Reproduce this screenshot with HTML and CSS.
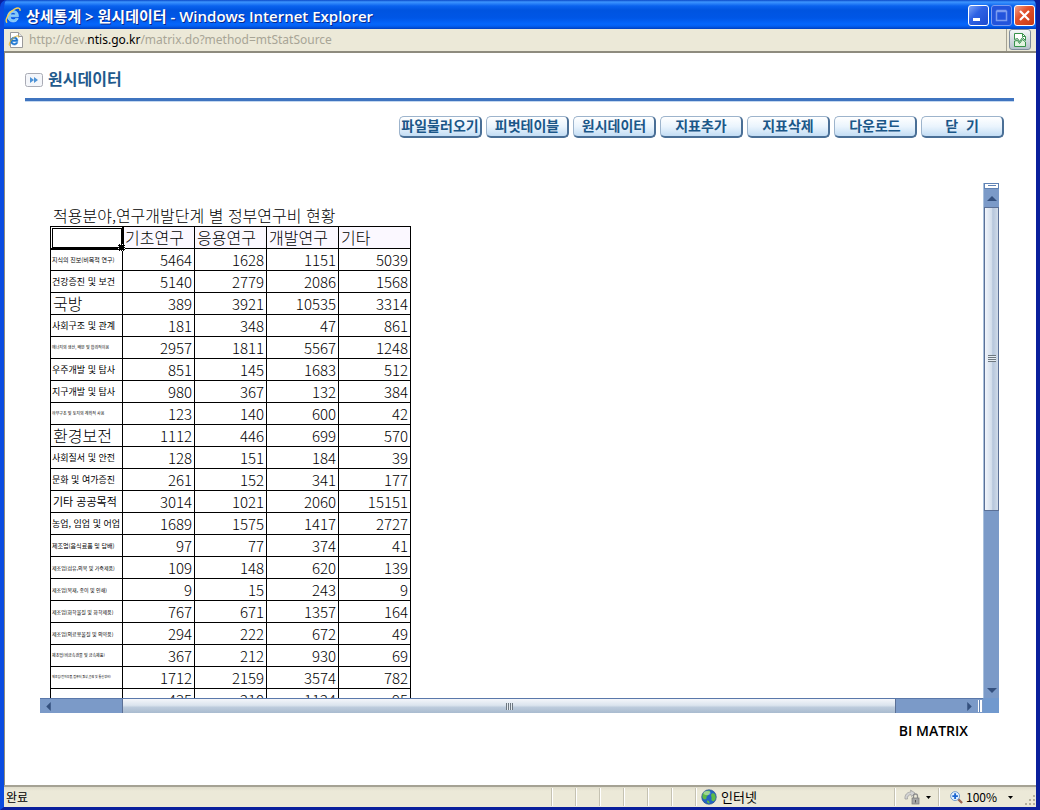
FILE: index.html
```html
<!DOCTYPE html>
<html lang="ko">
<head>
<meta charset="utf-8">
<title>상세통계 &gt; 원시데이터</title>
<link rel="stylesheet" href="styles.css">
</head>
<body>
<div class="window">
  <header class="titlebar">
    <svg class="icon-ie" viewBox="0 0 18 18" aria-hidden="true">
      <path d="M14.2 10.4H5.6c.1 2 1.3 3.1 3 3.1 1.200 0 2-.5 2.600-1.400h2.800c-.8 2.500-2.800 3.800-5.400 3.800-3.500 0-5.900-2.400-5.900-6s2.500-6.100 6-6.100c3.600 0 5.800 2.600 5.500 6.600zM5.700 8.300h5.700c-.2-1.600-1.200-2.400-2.700-2.400-1.600 0-2.700.9-3 2.400z" fill="#7cc8f8" stroke="#d8f0ff" stroke-width=".5"/>
      <path d="M2.300 16.600C-.8 14.500 4 5.500 10 2.300c3.500-1.900 6.600-1.600 5.800 1.900" fill="none" stroke="#f3cf58" stroke-width="1.500"/>
    </svg>
    <h1 class="caption">상세통계 &gt; 원시데이터 - Windows Internet Explorer</h1>
    <div class="window-buttons">
      <button class="win-btn" aria-label="최소화"><svg viewBox="0 0 19 19"><rect x="4" y="12" width="7" height="3" fill="#fff"/></svg></button>
      <button class="win-btn win-btn-off" aria-label="최대화" disabled><svg viewBox="0 0 19 19"><path d="M4.500 5.500h10v9h-10zM4.500 4.500h10" fill="none" stroke="#7c9cf0" stroke-width="1.500"/></svg></button>
      <button class="win-btn win-btn-close" aria-label="닫기"><svg viewBox="0 0 19 19"><path d="M5 5l9 9M14 5l-9 9" fill="none" stroke="#fff" stroke-width="2.200"/></svg></button>
    </div>
  </header>

  <div class="addressbar">
    <div class="address">
      <svg class="icon-page" viewBox="0 0 16 16" aria-hidden="true">
        <path d="M2.500.5h8l4 4v11h-12z" fill="#fff" stroke="#9a9a9a"/>
        <path d="M10.500.5v4h4" fill="#e4e4e4" stroke="#9a9a9a"/>
        <path d="M9.900 9.400H4.300c.1 1.300.9 2 2 2 .7 0 1.300-.3 1.700-.9h1.800c-.5 1.600-1.800 2.500-3.500 2.500-2.300 0-3.900-1.600-3.900-3.900s1.600-4 3.900-4 3.800 1.700 3.600 4.300zM4.400 8h3.700c-.1-1-.8-1.500-1.800-1.500S4.600 7 4.400 8z" fill="#1d76d0" stroke="#1d76d0" stroke-width=".5"/>
        <path d="M1.500 13.600C.2 12 3.500 6.500 7.500 4.500c2-1 3.800-.8 3.200 1" fill="none" stroke="#e0b22c"/>
      </svg>
      <span class="url">http://dev.<b>ntis.go.kr</b>/matrix.do?method=mtStatSource</span>
    </div>
    <button class="compat" aria-label="호환성 보기">
      <svg viewBox="0 0 16 16"><path d="M2.500 7.500v-6h8l3 3v4l-3-3-3 4-2-3z" fill="#fff" stroke="#36924a"/><path d="M2.500 9v5.500h11V10l-3-2.500-3 4-2-3z" fill="#e2f4e0" stroke="#36924a"/><path d="M10.500 1.500v3h3" fill="none" stroke="#36924a"/></svg>
    </button>
  </div>

  <main class="page">
    <div class="heading">
      <svg class="icon-heading" viewBox="0 0 18 14" aria-hidden="true"><rect x=".5" y=".5" width="17" height="13" rx="2" fill="#f4f6fa" stroke="#a9abb5"/><path d="M5 4l4 3-4 3zM9 4l4 3-4 3z" fill="#4e93d6"/></svg>
      <h2>원시데이터</h2>
    </div>

    <div class="toolbar">
      <button class="tool">파일불러오기</button>
      <button class="tool">피벗테이블</button>
      <button class="tool">원시데이터</button>
      <button class="tool">지표추가</button>
      <button class="tool">지표삭제</button>
      <button class="tool">다운로드</button>
      <button class="tool">닫&nbsp; 기</button>
    </div>

    <section class="sheet">
      <div class="cells">
        <table class="grid">
          <caption>적용분야,연구개발단계 별 정부연구비 현황</caption>
          <thead>
            <tr><th class="selected"></th><th>기초연구</th><th>응용연구</th><th>개발연구</th><th>기타</th></tr>
          </thead>
          <tbody>
            <tr><th class="t6">지식의 진보(비목적 연구)</th><td>5464</td><td>1628</td><td>1151</td><td>5039</td></tr>
            <tr><th class="t9">건강증진 및 보건</th><td>5140</td><td>2779</td><td>2086</td><td>1568</td></tr>
            <tr><th>국방</th><td>389</td><td>3921</td><td>10535</td><td>3314</td></tr>
            <tr><th class="t9">사회구조 및 관계</th><td>181</td><td>348</td><td>47</td><td>861</td></tr>
            <tr><th class="t4">에너지의 생산, 배분 및 합리적이용</th><td>2957</td><td>1811</td><td>5567</td><td>1248</td></tr>
            <tr><th class="t9">우주개발 및 탐사</th><td>851</td><td>145</td><td>1683</td><td>512</td></tr>
            <tr><th class="t9">지구개발 및 탐사</th><td>980</td><td>367</td><td>132</td><td>384</td></tr>
            <tr><th class="t4">하부구조 및 토지의 계획적 사용</th><td>123</td><td>140</td><td>600</td><td>42</td></tr>
            <tr><th>환경보전</th><td>1112</td><td>446</td><td>699</td><td>570</td></tr>
            <tr><th class="t9">사회질서 및 안전</th><td>128</td><td>151</td><td>184</td><td>39</td></tr>
            <tr><th class="t9">문화 및 여가증진</th><td>261</td><td>152</td><td>341</td><td>177</td></tr>
            <tr><th class="t11">기타 공공목적</th><td>3014</td><td>1021</td><td>2060</td><td>15151</td></tr>
            <tr><th class="t9">농업, 임업 및 어업</th><td>1689</td><td>1575</td><td>1417</td><td>2727</td></tr>
            <tr><th class="t6">제조업(음식료품 및 담배)</th><td>97</td><td>77</td><td>374</td><td>41</td></tr>
            <tr><th class="t5">제조업(섬유,의복 및 가죽제품)</th><td>109</td><td>148</td><td>620</td><td>139</td></tr>
            <tr><th class="t5">제조업(목재, 종이 및 인쇄)</th><td>9</td><td>15</td><td>243</td><td>9</td></tr>
            <tr><th class="t5">제조업(화학물질 및 화학제품)</th><td>767</td><td>671</td><td>1357</td><td>164</td></tr>
            <tr><th class="t5">제조업(의료용물질 및 의약품)</th><td>294</td><td>222</td><td>672</td><td>49</td></tr>
            <tr><th class="t4">제조업(비금속광물 및 금속제품)</th><td>367</td><td>212</td><td>930</td><td>69</td></tr>
            <tr><th class="t3">제조업(전자부품,컴퓨터,영상,음향 및 통신장비)</th><td>1712</td><td>2159</td><td>3574</td><td>782</td></tr>
            <tr><th></th><td>435</td><td>210</td><td>1124</td><td>95</td></tr>
          </tbody>
        </table>
      </div>
      <div class="vscroll">
        <span class="split-v"></span>
        <button class="arrow arrow-up" aria-label="위로"><svg viewBox="0 0 10 5"><path d="M0 5l5-5 5 5z"/></svg></button>
        <div class="vthumb"><span class="grip grip-v"></span></div>
        <div class="vtrack"></div>
        <button class="arrow arrow-down" aria-label="아래로"><svg viewBox="0 0 10 5"><path d="M0 0l5 5 5-5z"/></svg></button>
      </div>
      <div class="hscroll">
        <button class="arrow arrow-left" aria-label="왼쪽으로"><svg viewBox="0 0 5 10"><path d="M5 0L0 5l5 5z"/></svg></button>
        <div class="hlead"></div>
        <div class="hthumb"><span class="grip grip-h"></span></div>
        <div class="htrack"></div>
        <button class="arrow arrow-right" aria-label="오른쪽으로"><svg viewBox="0 0 5 10"><path d="M0 0l5 5-5 5z"/></svg></button>
        <span class="split-h"></span>
      </div>
      <div class="corner"></div>
    </section>
    <p class="brand">BI MATRIX</p>
  </main>

  <footer class="statusbar">
    <span class="status-text">완료</span>
    <span class="slot"></span><span class="slot"></span><span class="slot"></span><span class="slot"></span><span class="slot"></span><span class="slot"></span>
    <span class="slot zone">
      <svg class="icon-globe" viewBox="0 0 16 16" aria-hidden="true"><circle cx="8" cy="8" r="7.300" fill="#2463c4" stroke="#234a86" stroke-width=".6"/><path d="M2 4.500C4 1.500 8 1 9 2c1 1.500-1 2-1.500 3.500S5 7 5.500 8.500 4 11 2.500 10 1 6.500 2 4.500zM11 4.500c2-1 3 .5 3.500 2.500s0 4-1.500 5-3-.5-2.500-2.500S9 6 11 4.500zM6 11.500c1.500-.5 3 1 2.500 3-1.500.3-3-1.500-2.500-3z" fill="#5dbb46"/><ellipse cx="6" cy="4" rx="3.500" ry="2" fill="#fff" opacity=".4"/></svg>
      인터넷
    </span>
    <span class="slot lock">
      <svg class="icon-lock" viewBox="0 0 16 16" aria-hidden="true"><path d="M1 10c-.5-4 2-7 6-7l-.5-2L11 4 7.500 7.500 7 5.500C4.500 6 3 7.500 3.500 10z" fill="#d2d2d2" stroke="#9a9a9a" stroke-width=".7"/><path d="M9.500 9V7a2 2 0 014 0v2" fill="none" stroke="#8d8d8d" stroke-width="1.300"/><rect x="8" y="9" width="7" height="6" fill="#a5a5a5" stroke="#777" stroke-width=".7"/><path d="M11.500 11v2.500" stroke="#555"/></svg>
      <svg class="caret" viewBox="0 0 5 3" aria-hidden="true"><path d="M0 0h5L2.500 3z"/></svg>
    </span>
    <span class="slot zoom">
      <svg class="icon-zoom" viewBox="0 0 14 14" aria-hidden="true"><path d="M8.500 8.500L13 13" stroke="#9b6350" stroke-width="2.400"/><circle cx="5.500" cy="5.500" r="4.800" fill="#e4f2ff" stroke="#6a94c8"/><path d="M5.500 2.500v6M2.500 5.500h6" stroke="#1c66d0" stroke-width="2"/></svg>
      <span class="percent">100%</span>
      <svg class="caret" viewBox="0 0 5 3" aria-hidden="true"><path d="M0 0h5L2.500 3z"/></svg>
      <svg class="sizer" viewBox="0 0 11 11" aria-hidden="true"><path d="M8 0h2v2H8zM4 4h2v2H4zM8 4h2v2H8zM0 8h2v2H0zM4 8h2v2H4zM8 8h2v2H8z" fill="#b4b19f"/></svg>
    </span>
  </footer>
</div>
</body>
</html>
```
FILE: styles.css
```css
* {
  box-sizing: border-box;
}

body {
  margin: 0;
  background: #0a1f9c;
  color: #000;
  font-family: "Liberation Sans", "Noto Sans CJK KR", sans-serif;
  font-size: 12px;
}

button {
  display: flex;
  align-items: center;
  justify-content: center;
  margin: 0;
  padding: 0;
  border: 0;
  font-family: inherit;
}

svg {
  display: block;
  flex: none;
}

.window {
  display: flex;
  flex-direction: column;
  height: 100vh;
  min-height: 480px;
  overflow: hidden;
  border: solid;
  border-width: 0 4px 3px;
  border-color: #0a4be0 #0a1f9c #0a1f9c #0a4be0;
  border-radius: 7px 7px 0 0;
}

/* Title bar */
.titlebar {
  display: flex;
  flex: none;
  align-items: center;
  gap: 4px;
  height: 29px;
  margin: 0 -4px;
  padding: 2px 5px 0;
  background: linear-gradient(#0a48c8 0, #3d95ff 2px, #0a62ee 6px, #0054e0 10px, #0056e6 18px, #0566fc 24px, #0460f2 26px, #0040c0 29px);
}

.icon-ie {
  width: 17px;
  height: 17px;
}

.caption {
  flex: 1;
  margin: 0;
  color: #fff;
  font-family: "Open Sans", "Noto Sans CJK KR", sans-serif;
  font-size: 15px;
  font-weight: 600;
  line-height: 20px;
  white-space: nowrap;
  text-shadow: 1px 1px #0a2a8c;
}

.window-buttons {
  display: flex;
  gap: 2px;
}

.win-btn {
  width: 21px;
  height: 21px;
  border: 1px solid #fff;
  border-radius: 3px;
  background: linear-gradient(135deg, #7da4f6, #2f62e4 40%, #1c4bd0);
}

.win-btn svg {
  width: 19px;
  height: 19px;
}

.win-btn-off {
  border-color: #7c9cf0;
  background: #2354dc;
}

.win-btn-close {
  background: linear-gradient(135deg, #f0a08a, #e2512c 40%, #c63a14);
}

/* Address bar */
.addressbar {
  display: flex;
  flex: none;
  height: 24px;
  padding-left: 1px;
  border-bottom: 2px solid #8e8b7e;
  background: #ece9d8;
}

.address {
  display: flex;
  flex: 1;
  align-items: center;
  gap: 5px;
  padding-left: 3px;
  border-right: 1px solid #a5a294;
}

.icon-page {
  width: 16px;
  height: 16px;
}

.url {
  color: #a8a596;
  font-family: "Noto Sans", "Noto Sans CJK KR", sans-serif;
  font-size: 12px;
  line-height: 18px;
}

.url b {
  color: #000;
  font-weight: 400;
}

.compat {
  width: 22px;
  height: 21px;
  margin: 0 5px 0 2px;
  border: 1px solid #7f8c9c;
  border-radius: 3px;
  background: linear-gradient(#f4f7f8, #b6c2cc);
}

.compat svg {
  width: 16px;
  height: 16px;
}

/* Page */
.page {
  display: flex;
  flex: 1;
  flex-direction: column;
  min-height: 0;
  padding: 16px 22px 0 20px;
  border-left: 1px solid #8e8b7e;
  background: #fff;
}

.heading {
  display: flex;
  flex: none;
  align-items: center;
  gap: 5px;
  height: 32px;
  padding-bottom: 8px;
  border-bottom: 3px solid #3f74bf;
  box-shadow: 0 1px #c4d8f0;
}

.icon-heading {
  width: 18px;
  height: 14px;
}

.heading h2 {
  margin: 0;
  color: #1f5a8c;
  font-size: 16px;
  font-weight: 700;
  line-height: 20px;
}

.toolbar {
  display: flex;
  flex: none;
  justify-content: flex-end;
  gap: 4px;
  padding: 15px 10px 45px 0;
}

.tool {
  width: 83px;
  height: 22px;
  padding-bottom: 2px;
  border: 1px solid #9db4cc;
  border-right: 2px solid #4a6f96;
  border-bottom: 2px solid #4a6f96;
  border-radius: 5px;
  background: linear-gradient(#fff, #eaf4fd 50%, #c3ddf4);
  color: #1b5788;
  font-size: 14px;
  font-weight: 700;
  line-height: 16px;
  white-space: nowrap;
}

.sheet {
  display: grid;
  flex: 1;
  grid-template: minmax(0, 1fr) 15px / minmax(0, 1fr) 16px;
  min-height: 0;
  margin: 0 15px;
}

.cells {
  overflow: hidden;
  padding: 22px 0 0 10px;
}

.grid {
  width: 361px;
  table-layout: fixed;
  border-collapse: collapse;
  font-size: 16px;
}

.grid caption {
  height: 21px;
  padding-left: 3px;
  font-family: "Noto Sans CJK KR", sans-serif;
  font-weight: 300;
  line-height: 21px;
  text-align: left;
  white-space: nowrap;
}

.grid th,
.grid td {
  height: 22px;
  padding: 0 2px;
  border: 1px solid #000;
  line-height: 21px;
  white-space: nowrap;
}

.grid th {
  font-family: "Noto Sans CJK KR", sans-serif;
  font-weight: 300;
  text-align: left;
}

.grid thead th {
  background: #fbf8ff;
}

.grid td {
  font-family: "Noto Sans CJK KR", sans-serif;
  font-size: 15px;
  font-weight: 300;
  text-align: right;
}

/* Active cell with its fill handle */
.grid thead .selected {
  position: relative;
  background: #fff;
  outline: 3px double #000;
  outline-offset: -2px;
}

.selected::after {
  content: "";
  position: absolute;
  right: -3px;
  bottom: -3px;
  width: 5px;
  height: 5px;
  border: 1px dotted #fff;
  background: #000;
}

.grid .t11 { font-size: 11px; }
.grid .t9 { font-size: 9px; }
.grid .t6 { font-size: 6px; }
.grid .t5 { font-size: 5px; }
.grid .t4 { font-size: 4px; }
.grid .t3 { font-size: 3px; }

.grid .t11,
.grid .t9,
.grid .t6,
.grid .t5,
.grid .t4,
.grid .t3 {
  font-weight: 400;
}

.grid .t9,
.grid .t6,
.grid .t5,
.grid .t4,
.grid .t3 {
  padding-left: 1px;
}

/* Scroll bars */
.vscroll {
  display: flex;
  flex-direction: column;
  border-left: 1px solid #a9c0dc;
  background: #7b9ac8;
}

.split-v {
  height: 6px;
  border: 1px solid #5f82b4;
  background: linear-gradient(#fff 1px, #5f82b4 1px, #5f82b4 2px, #fff 2px) center / 8px 4px no-repeat #fff;
}

.arrow {
  flex: none;
  background: #7b9ac8;
  fill: #34507e;
}

.arrow-up {
  height: 18px;
}

.arrow-down {
  height: 16px;
}

.arrow-up svg,
.arrow-down svg {
  width: 10px;
  height: 5px;
}

.vthumb {
  display: flex;
  flex: 303;
  align-items: center;
  justify-content: center;
  border: 1px solid #5b7096;
  background: linear-gradient(90deg, #f0f4fb, #d3deec 50%, #b6c6dc 60%, #d0dbe9);
}

.vtrack {
  flex: 172;
}

.grip-v {
  width: 8px;
  height: 7px;
  background: repeating-linear-gradient(#6d7780 0, #6d7780 1px, #e4ebf2 1px, #e4ebf2 2px);
}

.hscroll {
  display: flex;
  border-top: 1px solid #5a78aa;
  background: #7b9ac8;
}

.arrow-left,
.arrow-right {
  width: 16px;
}

.arrow-left svg,
.arrow-right svg {
  width: 5px;
  height: 9px;
}

.hlead {
  flex: 66;
}

.hthumb {
  display: flex;
  flex: 774;
  align-items: center;
  justify-content: center;
  border: solid #5b7096;
  border-width: 0 1px;
  background: linear-gradient(#f4f6fa, #dbe4ee 45%, #bccbdc 60%, #a9bbcf);
}

.grip-h {
  width: 7px;
  height: 7px;
  background: repeating-linear-gradient(90deg, #6d7780 0, #6d7780 1px, #e4ebf2 1px, #e4ebf2 2px);
}

.htrack {
  flex: 65;
}

.split-h {
  width: 6px;
  border: 1px solid #7b9ac8;
  background: linear-gradient(90deg, #fff 1px, #5f82b4 1px, #5f82b4 2px, #fff 2px);
}

.corner {
  background: #7199ce;
}

.brand {
  flex: none;
  margin: 0;
  padding: 9px 46px 45px 0;
  font-family: "Open Sans", sans-serif;
  font-size: 14px;
  font-weight: 600;
  line-height: 18px;
  text-align: right;
}

/* Status bar */
.statusbar {
  display: flex;
  flex: none;
  align-items: center;
  height: 22px;
  border-top: 2px solid #a5a294;
  background: linear-gradient(#dedbca, #ece9d8 4px);
  font-family: "Noto Sans CJK KR", sans-serif;
}

.status-text {
  flex: 1;
  padding-left: 2px;
  line-height: 18px;
}

.slot {
  display: flex;
  flex: none;
  align-items: center;
  width: 24px;
  height: 18px;
  border-left: 1px solid #c5c2b2;
  box-shadow: inset 1px 0 #fff;
}

.zone {
  gap: 4px;
  width: 199px;
  padding-left: 5px;
  font-size: 13px;
  line-height: 18px;
}

.icon-globe,
.icon-lock {
  width: 16px;
  height: 16px;
}

.lock {
  gap: 6px;
  width: 44px;
  padding-left: 9px;
}

.zoom {
  width: 98px;
  padding-left: 11px;
}

.icon-zoom {
  width: 13px;
  height: 13px;
}

.percent {
  flex: 1;
  padding-left: 3px;
  line-height: 18px;
}

.caret {
  width: 5px;
  height: 3px;
}

.sizer {
  align-self: flex-end;
  width: 11px;
  height: 11px;
  margin-left: 12px;
}
```
